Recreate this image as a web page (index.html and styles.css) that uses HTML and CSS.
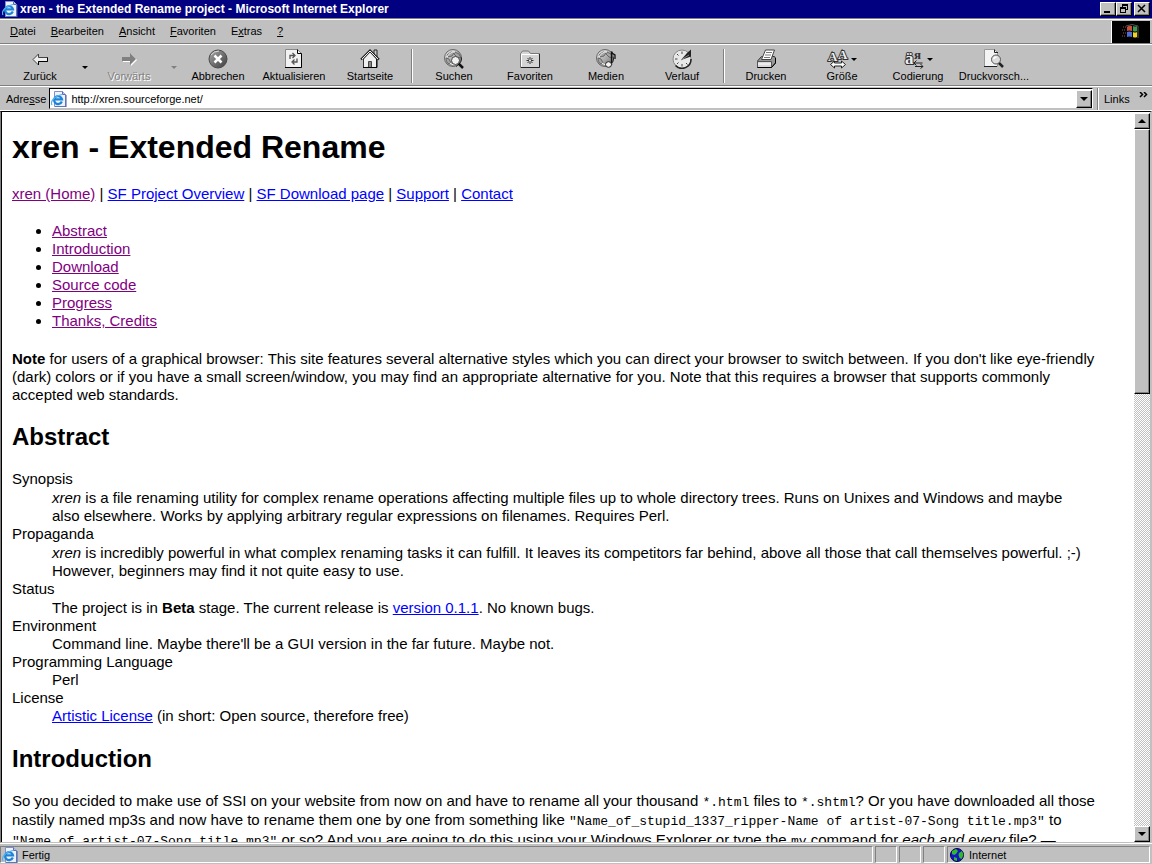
FILE: index.html
```html
<!DOCTYPE html>
<html lang="en">
<head>
    <meta charset="utf-8">
    <title>xren - the Extended Rename project</title>
    <link rel="stylesheet" href="styles.css">
</head>
<body>
    <!-- shared icons -->
    <svg class="defs" width="0" height="0" aria-hidden="true">
        <defs>
            <linearGradient id="metal" x1="0" y1="0" x2="1" y2="1">
                <stop offset="0" stop-color="#f4f4f4"/>
                <stop offset="1" stop-color="#6a6a6a"/>
            </linearGradient>
            <linearGradient id="dark" x1="0" y1="0" x2="1" y2="1">
                <stop offset="0" stop-color="#a8a8a8"/>
                <stop offset="1" stop-color="#3c3c3c"/>
            </linearGradient>
            <symbol id="ie" viewBox="0 0 16 16">
                <path d="M3.500.5h8l3 3v12h-11z" fill="#eef2fc" stroke="#7f93c8"/>
                <path d="M11.500.5v3h3" fill="#b8c6ee" stroke="#5a6fb0"/>
                <path d="M15 4v12H4" fill="none" stroke="#4455a0"/>
                <path d="M10.800 10.500A4 4 0 1 1 11 8.300H4" fill="none" stroke="#1c84d8" stroke-width="2.200"/>
                <path d="M1 14C-1 11 3 5 11 3.500" fill="none" stroke="#55b4f0" stroke-width="1.200"/>
            </symbol>
            <symbol id="globe" viewBox="0 0 20 20">
                <circle cx="9" cy="9" r="8.500" fill="url(#metal)" stroke="#666"/>
                <path d="M3 6l4-3 3 1-2 3-4 1zM11 3l4 2 2 4-4-1-3-3zM2 9l3 1 2 4-2 1c-2-1-3-3-3-6z" fill="#a4a4a4" stroke="#555" stroke-width=".8"/>
                <path d="M3 8c2-4 5-5 8-5M6 14c2 2 5 2 7 1" fill="none" stroke="#fff"/>
                <path d="M12 17.500c3-2 6-5 5.500-9" fill="none" stroke="#222"/>
            </symbol>
        </defs>
    </svg>

    <header>
        <div class="titlebar">
            <svg class="ie" width="16" height="16"><use href="#ie"/></svg>
            <span class="caption">xren - the Extended Rename project - Microsoft Internet Explorer</span>
            <div class="winbuttons">
                <button class="raised" aria-label="Minimieren"><svg width="10" height="10" shape-rendering="crispEdges"><path d="M1 7h6v2H1z"/></svg></button>
                <button class="raised" aria-label="Wiederherstellen"><svg width="10" height="10" shape-rendering="crispEdges"><path d="M3 0h6v6H7V5h1V2H4v1H3zM1 3h6v6H1zM2 5v3h4V5z" fill-rule="evenodd"/></svg></button>
                <button class="raised close" aria-label="Schließen"><svg width="10" height="10"><path d="M1 1l7 7M8 1l-7 7" stroke="#000" stroke-width="1.500"/></svg></button>
            </div>
        </div>

        <div class="menurow">
            <nav class="menubar">
                <button><u>D</u>atei</button>
                <button><u>B</u>earbeiten</button>
                <button><u>A</u>nsicht</button>
                <button><u>F</u>avoriten</button>
                <button>E<u>x</u>tras</button>
                <button><u>?</u></button>
            </nav>
            <div class="throbber">
                <svg width="18" height="16" viewBox="0 0 18 16">
                    <path d="M1 3h4M0 6h4M1 9h4M0 12h4" stroke="#9c4a50" stroke-dasharray="1 1"/>
                    <path d="M5 3q2-2 5-1v5q-3-1-5 0z" fill="#c8503c"/>
                    <path d="M11 2q2 1 4 0v5q-2 1-4 0z" fill="#3c9c4c"/>
                    <path d="M5 8q2-1 5 0v5q-3-1-5 0z" fill="#4c6cd0"/>
                    <path d="M11 8q2 1 4 0v5q-2 1-4 0z" fill="#f0d020"/>
                    <path d="M4 2q6-3 12 0v12" fill="none" stroke="#555"/>
                </svg>
            </div>
        </div>

        <div class="toolbar">
            <button class="tool">
                <svg width="20" height="20"><path d="M3 10.500L8.500 5v3.500h9v4h-9V16z" fill="#eee" stroke="#444"/><path d="M8.500 16v-3.500h9v-4" fill="none" stroke="#000"/></svg>
                <span>Zurück</span>
            </button>
            <button class="drop" aria-label="Zurück, Liste"><i class="arrow"></i></button>
            <button class="tool off" disabled>
                <svg width="20" height="20"><path d="M4 9h8V5l6 6-6 6v-4H4z" fill="#fff"/><path d="M3 8h8V4l6 6-6 6v-4H3z" fill="#808080"/></svg>
                <span>Vorwärts</span>
            </button>
            <button class="drop off" aria-label="Vorwärts, Liste" disabled><i class="arrow"></i></button>
            <button class="tool">
                <svg width="20" height="20"><circle cx="10" cy="10" r="9" fill="url(#dark)" stroke="#4a4a4a"/><path d="M3 6q3-4 8-4" fill="none" stroke="#ddd"/><path d="M6.500 6.500l7 7M13.500 6.500l-7 7" stroke="#fff" stroke-width="2.500"/></svg>
                <span>Abbrechen</span>
            </button>
            <button class="tool">
                <svg width="20" height="20"><path d="M1.500.5h12l4 4v14h-16z" fill="#f2f2f2" stroke="#888"/><path d="M17.500 4.500v14H1M13.500.5v4h4" fill="none" stroke="#000"/><path d="M6 10V6.500h4M8.500 4L11 6.500 8.500 9M13 9.500V13H9M10.500 10.500L8 13l2.500 2.500" fill="none" stroke="#555" stroke-width="1.300"/></svg>
                <span>Aktualisieren</span>
            </button>
            <button class="tool">
                <svg width="20" height="20"><path d="M14 1h3v7h-3z" fill="#ccc" stroke="#222"/><path d="M3.500 10L10 3l6.500 7v8.500h-13z" fill="#f0f0f0" stroke="#333"/><path d="M1 10.500l9-9 9 9" fill="none" stroke="#222" stroke-width="2"/><path d="M2 10l8-8 8 8" fill="none" stroke="#eee"/><path d="M8.500 12.500h3v6h-3z" fill="#888" stroke="#444"/><path d="M3 18.500h14V10" fill="none" stroke="#000"/></svg>
                <span>Startseite</span>
            </button>
            <div class="sep"></div>
            <button class="tool">
                <svg width="20" height="20"><use href="#globe" width="20" height="20"/><path d="M14.500 14.500l4.500 4.500" stroke="#111" stroke-width="2.500"/><circle cx="11.500" cy="11.500" r="4" fill="#f0f0f0" stroke="#444"/></svg>
                <span>Suchen</span>
            </button>
            <button class="tool">
                <svg width="20" height="20"><path d="M.5 18.500V4.500l2-2.500h6l2 2.500h9v14z" fill="#d4d4d4" stroke="#777"/><path d="M1.500 17.500v-12H18" fill="none" stroke="#fff"/><path d="M1 18.500h18.500V5" fill="none" stroke="#222"/><path d="M10 8v7M6.500 11.500h7M7.500 9l5 5M12.500 9l-5 5" stroke="#333"/><circle cx="10" cy="11.500" r="1" fill="#fff"/></svg>
                <span>Favoriten</span>
            </button>
            <button class="tool">
                <svg width="20" height="20"><use href="#globe" width="20" height="20"/><path d="M15.500 16V2.500q1 3 3.500 3.500v4" fill="none" stroke="#111" stroke-width="1.300"/><ellipse cx="12.500" cy="15.500" rx="3" ry="2.800" fill="#f4f4f4" stroke="#222"/></svg>
                <span>Medien</span>
            </button>
            <button class="tool">
                <svg width="20" height="20"><circle cx="10" cy="10" r="9" fill="#e8e8e8" stroke="#888"/><path d="M3.500 16.500A9 9 0 0 0 19 10" fill="none" stroke="#222" stroke-width="1.500"/><path d="M10 2.500v2.500M3 10h2.500M10 15v2.500M5 5l1.500 1.500M5 15l1.500-1.500M14 14l1.500 1.500" stroke="#444"/><path d="M9 11l6-7 4-3.500v7z" fill="#222"/><path d="M9 11l8-5" stroke="#888"/></svg>
                <span>Verlauf</span>
            </button>
            <div class="sep"></div>
            <button class="tool">
                <svg width="20" height="20"><path d="M1.500 12l4-4.500h13l1 1.500v5l-4 4.500h-14z" fill="#999" stroke="#333"/><path d="M5.500 10.500l4-9.500h9L15 10.500z" fill="#fff" stroke="#444"/><path d="M10 3.500h6M9 6h6M8 8.500h6" stroke="#777"/><path d="M1.500 12.500h14v6h-14z" fill="#d8d8d8" stroke="#555"/><path d="M2 15h13" stroke="#fff"/><path d="M1.500 18.500h14l4-4.500V9" fill="none" stroke="#000"/></svg>
                <span>Drucken</span>
            </button>
            <button class="tool">
                <div class="pic">
                    <svg class="glyphs" width="20" height="20"><text x="0" y="12" font-size="13">A</text><text x="10" y="10" font-size="13">A</text><path d="M2.500 15.500l4-3.500v2h7v-2l4 3.500-4 3.500v-2h-7v2z" fill="#fff" stroke="#222"/></svg>
                    <i class="arrow"></i>
                </div>
                <span>Größe</span>
            </button>
            <button class="tool">
                <div class="pic">
                    <svg class="glyphs" width="20" height="20"><text x="10" y="10" font-size="13" class="solid">я</text><text x="1" y="15" font-size="17">ä</text><path d="M9.500 14h9M12.500 11.500L10 14l2.500 2.500M11 17.500h8M16.500 15l2.500 2.500-2.500 2" fill="none" stroke="#222"/></svg>
                    <i class="arrow"></i>
                </div>
                <span>Codierung</span>
            </button>
            <button class="tool">
                <svg width="20" height="20"><path d="M.5.500h10l3 3v14H.5z" fill="#f4f4f4" stroke="#999"/><path d="M10.500.5v3h3.500M0 17.500h13" fill="none" stroke="#222"/><path d="M14.500 13.500l4.500 4.500" stroke="#222" stroke-width="2.500"/><circle cx="12" cy="10.500" r="4.500" fill="#ddd" stroke="#555"/><path d="M9.500 10q1-2 3-2" fill="none" stroke="#fff" stroke-width="1.500"/></svg>
                <span>Druckvorsch...</span>
            </button>
        </div>

        <div class="addressrow">
            <label for="address">Adre<u>s</u>se</label>
            <div class="combo">
                <svg class="ie" width="16" height="16"><use href="#ie"/></svg>
                <input id="address" type="text" value="http://xren.sourceforge.net/">
                <button class="raised" aria-label="Adressliste"><i class="arrow"></i></button>
            </div>
            <div class="links">
                <span>Links</span>
                <svg width="9" height="6"><path d="M1 0l2.500 2.500L1 5M5 0l2.500 2.500L5 5" fill="none" stroke="#000" stroke-width="1.500"/></svg>
            </div>
        </div>
    </header>

    <div class="view">
        <main>
            <h1>xren - Extended Rename</h1>
            <p><a class="visited" href="#">xren (Home)</a> | <a href="#">SF Project Overview</a> | <a href="#">SF Download page</a> | <a href="#">Support</a> | <a href="#">Contact</a></p>
            <ul>
                <li><a class="visited" href="#abstract">Abstract</a></li>
                <li><a class="visited" href="#introduction">Introduction</a></li>
                <li><a class="visited" href="#">Download</a></li>
                <li><a class="visited" href="#">Source code</a></li>
                <li><a class="visited" href="#">Progress</a></li>
                <li><a class="visited" href="#">Thanks, Credits</a></li>
            </ul>
            <p><strong>Note</strong> for users of a graphical browser: This site features several alternative styles which you can direct your browser to switch between. If you don't like eye-friendly<br>
            (dark) colors or if you have a small screen/window, you may find an appropriate alternative for you. Note that this requires a browser that supports commonly<br>
            accepted web standards.</p>

            <h2 id="abstract">Abstract</h2>
            <dl>
                <dt>Synopsis</dt>
                <dd><em>xren</em> is a file renaming utility for complex rename operations affecting multiple files up to whole directory trees. Runs on Unixes and Windows and maybe<br>
                also elsewhere. Works by applying arbitrary regular expressions on filenames. Requires Perl.</dd>
                <dt>Propaganda</dt>
                <dd><em>xren</em> is incredibly powerful in what complex renaming tasks it can fulfill. It leaves its competitors far behind, above all those that call themselves powerful. ;-)<br>
                However, beginners may find it not quite easy to use.</dd>
                <dt>Status</dt>
                <dd>The project is in <strong>Beta</strong> stage. The current release is <a href="#">version 0.1.1</a>. No known bugs.</dd>
                <dt>Environment</dt>
                <dd>Command line. Maybe there'll be a GUI version in the far future. Maybe not.</dd>
                <dt>Programming Language</dt>
                <dd>Perl</dd>
                <dt>License</dt>
                <dd><a href="#">Artistic License</a> (in short: Open source, therefore free)</dd>
            </dl>

            <h2 id="introduction">Introduction</h2>
            <p>So you decided to make use of SSI on your website from now on and have to rename all your thousand <code>*.html</code> files to <code>*.shtml</code>? Or you have downloaded all those<br>
            nastily named mp3s and now have to rename them one by one from something like <code>"Name_of_stupid_1337_ripper-Name of artist-07-Song title.mp3"</code> to<br>
            <code>"Name_of_artist-07-Song title.mp3"</code> or so? And you are going to do this using your Windows Explorer or type the <code>mv</code> command for <em>each and every</em> file? —</p>
        </main>
        <div class="scrollbar">
            <button class="raised" aria-label="Nach oben"><i class="arrow up"></i></button>
            <div class="track"><div class="thumb raised"></div></div>
            <button class="raised" aria-label="Nach unten"><i class="arrow"></i></button>
        </div>
    </div>

    <footer>
        <div class="cell grow">
            <svg class="ie" width="16" height="16"><use href="#ie"/></svg>
            <span>Fertig</span>
        </div>
        <div class="cell"></div>
        <div class="cell"></div>
        <div class="cell"></div>
        <div class="cell zone">
            <svg width="14" height="14"><circle cx="7" cy="7" r="6.500" fill="#1414c8" stroke="#000040"/><path d="M2 3l4-2 2 2-2 3-2 1-2-1zM9 5l3-2 1.500 4-2 4-2-1-1-3zM4 9l3 1v3l-3-1z" fill="#30b830"/></svg>
            <span>Internet</span>
        </div>
    </footer>
</body>
</html>
```

FILE: styles.css
```css
* {
    box-sizing: border-box;
}

body {
    margin: 0;
    height: 100vh;
    display: flex;
    flex-direction: column;
    overflow: hidden;
    background: #c0c0c0;
    color: #000;
    font: 11px/14px "Liberation Sans", Arial, sans-serif;
}

button, input {
    font: inherit;
    color: inherit;
    background: none;
    border: 0;
    margin: 0;
    padding: 0;
}

svg {
    display: block;
    flex: none;
}

.defs {
    position: absolute;
}

.raised {
    display: flex;
    align-items: center;
    justify-content: center;
    background: #c0c0c0;
    border: 1px solid;
    border-color: #fff #000 #000 #fff;
    box-shadow: inset -1px -1px #808080;
}

.arrow {
    width: 0;
    height: 0;
    border: 3px solid transparent;
    border-top-color: #000;
    border-bottom: 0;
}

.arrow.up {
    border-top: 0;
    border-bottom: 3px solid #000;
}

.raised .arrow {
    border-left-width: 4px;
    border-right-width: 4px;
}

.raised .arrow:not(.up) {
    border-top-width: 4px;
}

.raised .arrow.up {
    border-bottom-width: 4px;
}

/* title bar */
.titlebar {
    display: flex;
    align-items: center;
    gap: 2px;
    height: 18px;
    padding: 0 2px;
    background: #000080;
    color: #fff;
}

.caption {
    flex: 1;
    font-size: 12px;
    font-weight: bold;
}

.winbuttons {
    display: flex;
}

.winbuttons button {
    width: 16px;
    height: 14px;
}

.winbuttons .close {
    margin-left: 2px;
}

/* menu */
.menurow {
    display: flex;
    height: 26px;
    border-top: 1px solid #808080;
    border-bottom: 1px solid #808080;
    box-shadow: inset 0 1px #fff;
}

.menubar {
    flex: 1;
    display: flex;
    align-items: center;
    gap: 15px;
    padding-left: 10px;
}

.throbber {
    width: 39px;
    margin: 2px 2px 0 0;
    border-left: 1px solid #fff;
    background: #000;
    display: flex;
    align-items: center;
    justify-content: center;
}

/* buttons */
.toolbar {
    display: flex;
    height: 42px;
    padding: 4px 2px 0;
    border-top: 1px solid #fff;
    border-bottom: 1px solid #808080;
}

.tool {
    width: 76px;
    flex: none;
    display: flex;
    flex-direction: column;
    align-items: center;
    line-height: 14px;
    white-space: nowrap;
}

.tool .pic {
    display: flex;
    align-items: center;
    gap: 3px;
}

.glyphs {
    overflow: visible;
}

.glyphs text {
    font-family: "Liberation Serif", "Times New Roman", serif;
    font-weight: bold;
    fill: #eee;
    stroke: #333;
    stroke-width: 2px;
    paint-order: stroke;
}

.glyphs .solid {
    fill: #333;
    stroke: none;
}

.drop {
    width: 13px;
    flex: none;
    display: flex;
    align-items: center;
    justify-content: center;
}

.off {
    color: #808080;
    text-shadow: 1px 1px #fff;
}

.off .arrow {
    border-top-color: #808080;
}

.sep {
    width: 2px;
    margin: 0 3px 2px;
    border-left: 1px solid #808080;
    border-right: 1px solid #fff;
}

/* address */
.addressrow {
    display: flex;
    align-items: center;
    height: 25px;
    padding: 0 2px 0 6px;
    border-top: 1px solid #fff;
    border-bottom: 1px solid #fff;
}

.combo {
    flex: 1;
    display: flex;
    align-items: center;
    height: 21px;
    margin-left: 3px;
    padding-left: 1px;
    background: #fff;
    border: 1px solid;
    border-color: #000 #fff #c0c0c0 #000;
}

.combo input {
    flex: 1;
    margin-left: 4px;
    outline: 0;
}

.combo button {
    width: 16px;
    height: 18px;
}

.links {
    display: flex;
    justify-content: space-between;
    width: 52px;
    height: 22px;
    margin-left: 5px;
    padding: 4px 2px 0 5px;
    border-left: 1px solid #fff;
    box-shadow: -1px 0 #808080;
}

/* page */
.view {
    flex: 1;
    min-height: 0;
    display: flex;
    background: #fff;
    border: solid;
    border-width: 1px 2px 1px 1px;
    border-color: #000 #c0c0c0 #c0c0c0 #808080;
}

main {
    flex: 1;
    min-width: 0;
    overflow: hidden;
    padding: 17px 10px 0;
    border-left: 1px solid #000;
    font-size: 15px;
    line-height: 18px;
}

h1 {
    margin: 0 0 19px;
    font-size: 32px;
    line-height: 37px;
}

h2 {
    margin: 19px 0 20px;
    font-size: 24px;
    line-height: 27px;
}

main p, ul {
    margin: 19px 0;
}

dl {
    margin: 20px 0;
}

ul {
    padding-left: 40px;
}

dd {
    margin-left: 40px;
}

em, strong {
    line-height: 19px;
}

code {
    font-family: "Liberation Mono", "Courier New", monospace;
    font-size: 13px;
    line-height: 16px;
}

a {
    color: #0000ff;
}

a.visited {
    color: #800080;
}

.scrollbar {
    width: 16px;
    display: flex;
    flex-direction: column;
    padding-top: 1px;
}

.scrollbar button {
    height: 16px;
    flex: none;
}

.track {
    flex: 1;
    background: repeating-conic-gradient(#fff 0 25%, #c0c0c0 0 50%) 0 0 / 2px 2px;
}

.thumb {
    height: 38%;
}

/* status bar */
footer {
    display: flex;
    gap: 2px;
    height: 21px;
    padding: 2px 2px 1px 0;
    border-top: 1px solid #fff;
}

.cell {
    width: 22px;
    display: flex;
    align-items: center;
    border: 1px solid;
    border-color: #808080 #fff #fff #808080;
}

.cell.grow {
    flex: 1;
    gap: 4px;
    padding-left: 1px;
}

.cell.zone {
    width: 203px;
    gap: 5px;
    padding-left: 2px;
}
```
